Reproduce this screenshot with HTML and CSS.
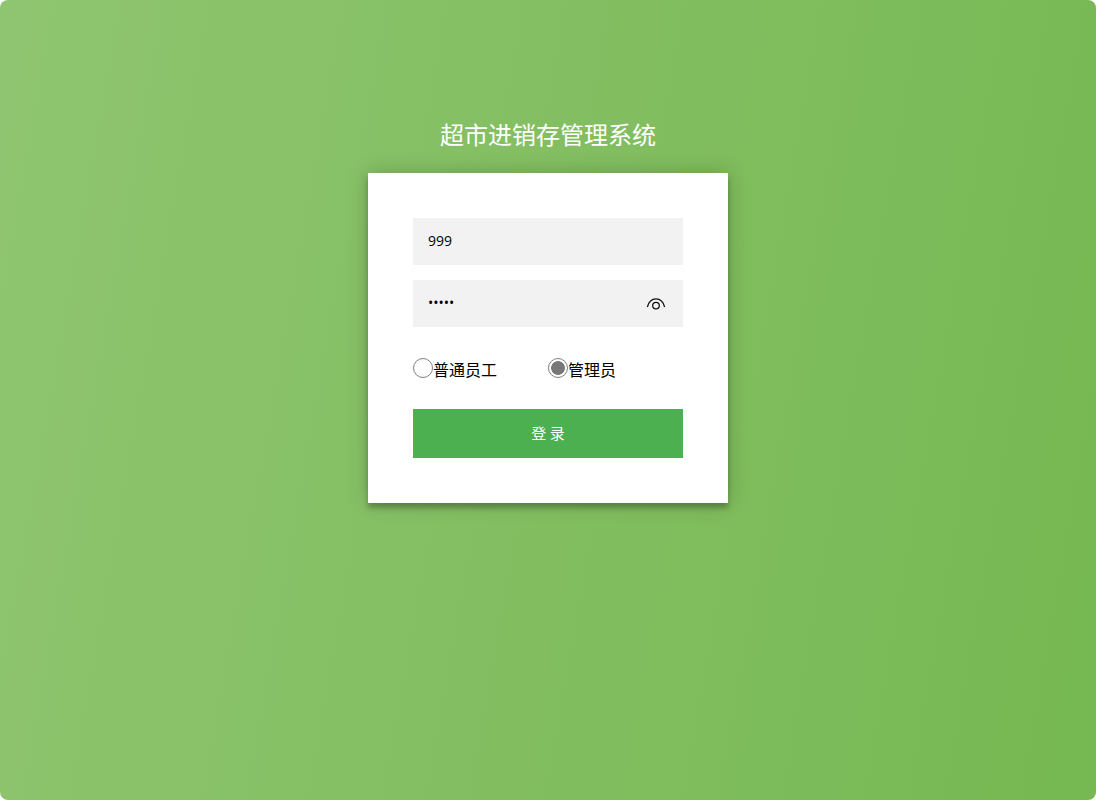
FILE: index.html
```html
<!DOCTYPE html>
<html lang="zh-CN">
<head>
    <meta charset="UTF-8">
    <meta name="viewport" content="width=device-width, initial-scale=1.0">
    <title>超市进销存管理系统</title>
    <link rel="stylesheet" href="styles.css">
</head>
<body>
    <div class="page">
        <h1 class="title">超市进销存管理系统</h1>
        <form class="login-card">
            <div class="field">
                <input class="field-input" type="text" value="999">
            </div>
            <div class="field">
                <input class="field-input" type="password" value="12345">
                <svg class="eye" width="20" height="14" viewBox="0 0 20 14" fill="none" stroke="#111" stroke-width="1.3">
                    <path d="M1.4 10C2.6 5.2 5.8 1.9 10 1.9s7.4 3.3 8.6 8.1"/>
                    <circle cx="10" cy="8.6" r="3.3"/>
                </svg>
            </div>
            <div class="roles">
                <label class="role"><input class="role-radio" type="radio" name="role">普通员工</label>
                <label class="role"><input class="role-radio" type="radio" name="role" checked>管理员</label>
            </div>
            <button class="login-btn" type="button">登 录</button>
        </form>
    </div>
</body>
</html>
```

FILE: styles.css
```css
* {
    box-sizing: border-box;
}

body {
    margin: 0;
    background: #ffffff;
    font-family: "Noto Sans CJK SC", "Noto Sans", sans-serif;
}

.page {
    height: 800px;
    border-radius: 8px;
    background: linear-gradient(100deg, #8fc570, #76b852);
    display: flex;
    flex-direction: column;
    align-items: center;
    padding-top: 116px;
}

.title {
    margin: 0 0 22px;
    font-size: 24px;
    font-weight: 400;
    line-height: 35px;
    color: #ffffff;
}

.login-card {
    width: 360px;
    height: 330px;
    padding: 45px;
    background: #ffffff;
    box-shadow: 0 0 20px 0 rgba(0, 0, 0, 0.2), 0 5px 5px 0 rgba(0, 0, 0, 0.24);
}

.field {
    position: relative;
    margin-bottom: 15px;
}

.field-input {
    display: block;
    width: 100%;
    height: 47px;
    padding: 13px 15px 15px;
    border: 0;
    outline: 0;
    background: #f2f2f2;
    color: #000000;
    font-family: "Open Sans", "Noto Sans", sans-serif;
    font-size: 14px;
}

.eye {
    position: absolute;
    right: 17px;
    top: 17px;
}

.roles {
    display: flex;
    margin-top: 31px;
    margin-bottom: 29px;
    height: 22px;
}

.role {
    width: 135px;
    display: flex;
    align-items: center;
    padding-bottom: 1px;
    font-size: 16px;
    line-height: 22px;
    color: #000000;
}

.role-radio {
    appearance: none;
    align-self: flex-start;
    width: 20px;
    height: 20px;
    margin: 0;
    border: 1px solid #808080;
    border-radius: 50%;
    background: #ffffff;
}

.role-radio:checked {
    background: radial-gradient(circle, #787878 0, #787878 6.5px, #ffffff 7.2px);
}

.login-btn {
    display: block;
    width: 100%;
    height: 49px;
    padding-bottom: 3px;
    border: 0;
    background: #4caf50;
    color: #ffffff;
    font-family: "Noto Sans CJK SC", sans-serif;
    font-size: 15px;
}
```
